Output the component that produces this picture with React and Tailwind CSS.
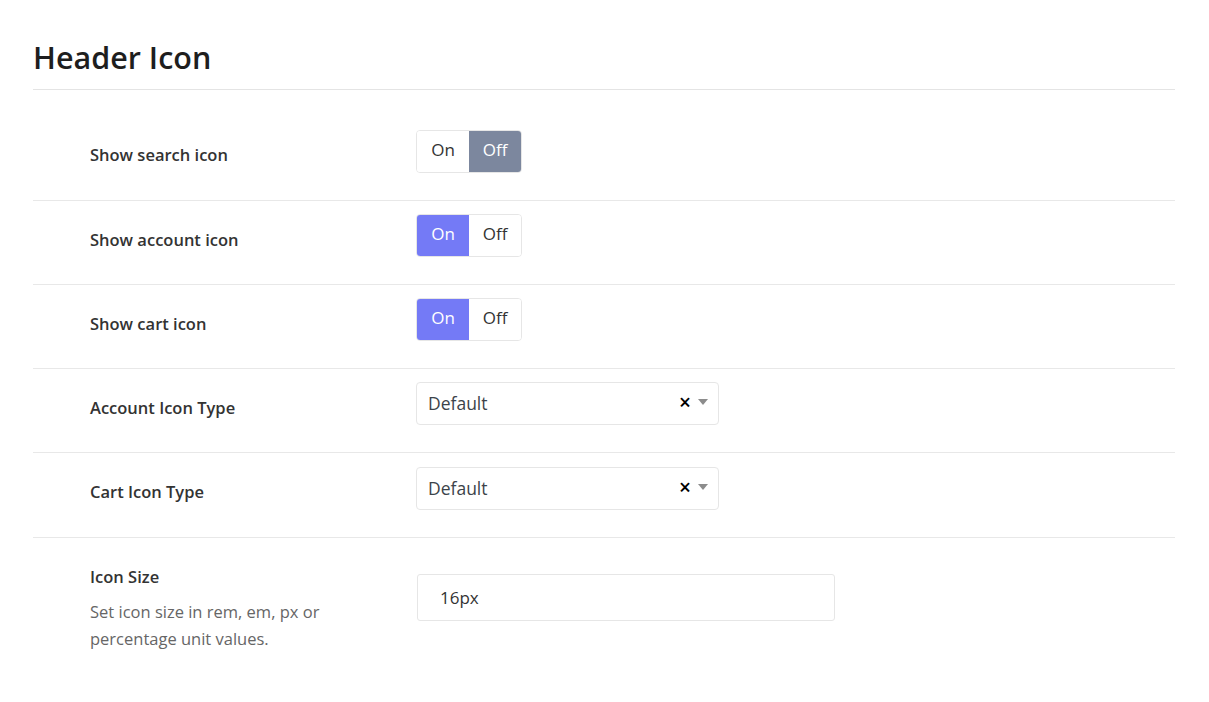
import { useState } from "react"

function Toggle({ value, onChange }) {
  const on = value === "on"
  return (
    <div className="flex h-[43px] w-[106px] rounded-[4px] border border-[#e6e6e6] overflow-hidden text-[17px]">
      <button
        onClick={() => onChange("on")}
        className={`flex-1 flex items-center justify-center pb-[3px] ${on ? "bg-[#747af6] text-white" : "bg-white text-[#333]"}`}
      >
        On
      </button>
      <button
        onClick={() => onChange("off")}
        className={`flex-1 flex items-center justify-center pb-[3px] ${!on ? "bg-[#7c879e] text-white" : "bg-white text-[#333]"}`}
      >
        Off
      </button>
    </div>
  )
}

function Select({ value }) {
  return (
    <div className="flex items-center h-[43px] w-[303px] rounded-[4px] border border-[#e6e6e6] bg-white pl-[11px] pr-[10px]">
      <span className="flex-1 text-[17.5px] text-[#3c434a] pb-[1px]">{value}</span>
      <span className="text-[21px] font-semibold text-black leading-none mr-[7px] pb-[3px]">×</span>
      <svg width="10" height="6" viewBox="0 0 10 6" className="mb-[4px]">
        <path d="M0 0h10L5 6z" fill="#8c8c8c" />
      </svg>
    </div>
  )
}

function Row({ label, children, pt = "pt-[13px]", pb = "pb-[27px]", lt = "pt-[13px]" }) {
  return (
    <div className={`flex border-b border-[#e8e8e8] pl-[57px] ${pt} ${pb}`}>
      <div className={`w-[326px] shrink-0 ${lt}`}>
        <div className="text-[16.5px] font-semibold text-[#333] leading-[26px]">{label}</div>
      </div>
      <div>{children}</div>
    </div>
  )
}

export default function App() {
  const [search, setSearch] = useState("off")
  const [account, setAccount] = useState("on")
  const [cart, setCart] = useState("on")

  return (
    <div className="bg-white min-h-[702px] px-[33px] pr-[34px] pt-[37px]" style={{ fontFamily: '"Open Sans", "Noto Sans", sans-serif' }}>
      <h1 className="text-[30.5px] font-semibold text-[#1e1e1e] leading-[40px] pb-[12px] border-b border-[#e4e4e4]">
        Header Icon
      </h1>
      <div className="pt-[26px]">
        <Row label="Show search icon" pt="pt-[14px]" lt="pt-[12px]">
          <Toggle value={search} onChange={setSearch} />
        </Row>
        <Row label="Show account icon">
          <Toggle value={account} onChange={setAccount} />
        </Row>
        <Row label="Show cart icon">
          <Toggle value={cart} onChange={setCart} />
        </Row>
        <Row label="Account Icon Type">
          <Select value="Default" />
        </Row>
        <Row label="Cart Icon Type" pt="pt-[14px]" lt="pt-[12px]">
          <Select value="Default" />
        </Row>
        <div className="flex pt-[14px] pl-[57px]">
          <div className="w-[327px] shrink-0 pt-[12px]">
            <div className="text-[16.5px] font-semibold text-[#333] leading-[26px]">Icon Size</div>
            <p className="mt-[8px] text-[16.5px] text-[#666] leading-[27px] w-[260px]">
              Set icon size in rem, em, px or percentage unit values.
            </p>
          </div>
          <div className="pt-[22px]">
            <input
              defaultValue="16px"
              className="h-[47px] w-[418px] rounded-[3px] border border-[#e6e6e6] px-[22px] text-[17px] text-[#333] outline-none"
            />
          </div>
        </div>
      </div>
    </div>
  )
}
